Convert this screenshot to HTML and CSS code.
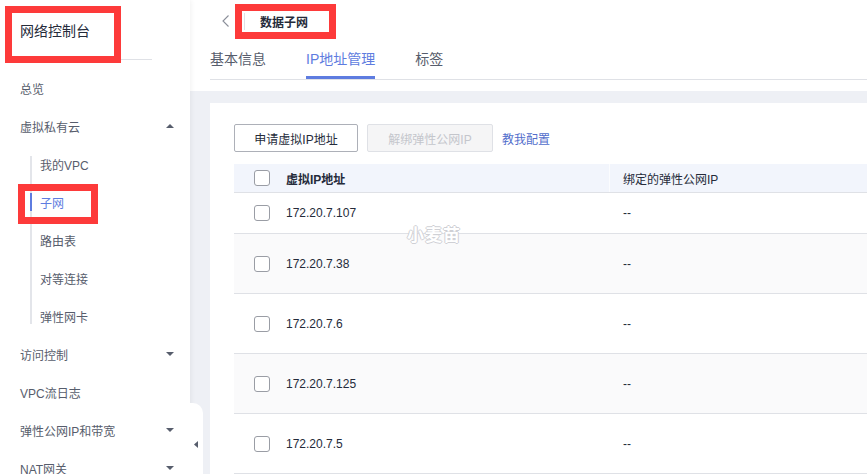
FILE: index.html
```html
<!DOCTYPE html>
<html lang="zh-CN">
<head>
<meta charset="utf-8">
<title>数据子网 - IP地址管理</title>
<link rel="stylesheet" href="styles.css">
</head>
<body>
<div class="app">
  <aside class="sidebar">
    <div class="side-title">网络控制台</div>
    <div class="side-divider"></div>
    <nav class="menu">
      <div class="menu-item">总览</div>
      <div class="menu-item">虚拟私有云
        <svg class="caret" width="8" height="4" viewBox="0 0 8 4"><path d="M0 4L4 0L8 4Z"/></svg>
      </div>
      <div class="sub">
        <div class="sub-item">我的VPC</div>
        <div class="sub-item active">子网</div>
        <div class="sub-item">路由表</div>
        <div class="sub-item">对等连接</div>
        <div class="sub-item">弹性网卡</div>
      </div>
      <div class="menu-item">访问控制
        <svg class="caret" width="8" height="4" viewBox="0 0 8 4"><path d="M0 0L4 4L8 0Z"/></svg>
      </div>
      <div class="menu-item">VPC流日志</div>
      <div class="menu-item">弹性公网IP和带宽
        <svg class="caret" width="8" height="4" viewBox="0 0 8 4"><path d="M0 0L4 4L8 0Z"/></svg>
      </div>
      <div class="menu-item">NAT网关
        <svg class="caret" width="8" height="4" viewBox="0 0 8 4"><path d="M0 0L4 4L8 0Z"/></svg>
      </div>
    </nav>
  </aside>

  <main class="main">
    <header class="header">
      <div class="crumb">
        <svg class="back" width="7" height="12" viewBox="0 0 7 12"><path d="M6.5 0.5L1 6L6.5 11.5" fill="none" stroke="#8a8e99" stroke-width="1.1"/></svg>
        <span class="crumb-sep"></span>
        <span class="crumb-title">数据子网</span>
      </div>
      <div class="tabs">
        <div class="tab">基本信息</div>
        <div class="tab active">IP地址管理</div>
        <div class="tab">标签</div>
      </div>
    </header>

    <section class="content">
      <div class="card">
        <div class="toolbar">
          <button class="btn">申请虚拟IP地址</button>
          <button class="btn disabled">解绑弹性公网IP</button>
          <a class="link">教我配置</a>
        </div>
        <div class="table">
          <div class="row head">
            <div class="cell first"><span class="check"></span><span class="th-strong">虚拟IP地址</span></div>
            <div class="cell second">绑定的弹性公网IP</div>
          </div>
          <div class="row short">
            <div class="cell first"><span class="check"></span>172.20.7.107</div>
            <div class="cell second">--</div>
          </div>
          <div class="row stripe">
            <div class="cell first"><span class="check"></span>172.20.7.38</div>
            <div class="cell second">--</div>
          </div>
          <div class="row">
            <div class="cell first"><span class="check"></span>172.20.7.6</div>
            <div class="cell second">--</div>
          </div>
          <div class="row stripe">
            <div class="cell first"><span class="check"></span>172.20.7.125</div>
            <div class="cell second">--</div>
          </div>
          <div class="row">
            <div class="cell first"><span class="check"></span>172.20.7.5</div>
            <div class="cell second">--</div>
          </div>
        </div>
      </div>
    </section>
  </main>

  <div class="collapse-tab">
    <svg width="4" height="7" viewBox="0 0 4 7"><path d="M4 0L0 3.5L4 7Z"/></svg>
  </div>
  <div class="watermark">小麦苗</div>
  <div class="mark mark-title"></div>
  <div class="mark mark-crumb"></div>
  <div class="mark mark-sub"></div>
</div>
</body>
</html>
```

FILE: styles.css
```css
* { box-sizing: border-box; }
html, body { margin: 0; padding: 0; }
body {
  width: 867px;
  height: 474px;
  overflow: hidden;
  font-family: "Liberation Sans", "Noto Sans CJK SC", sans-serif;
  font-size: 12px;
  color: #252b3a;
  background: #eef0f5;
}
.app {
  position: relative;
  display: flex;
  width: 867px;
  height: 474px;
  overflow: hidden;
}

/* Sidebar */
.sidebar {
  position: relative;
  z-index: 2;
  width: 190px;
  flex: none;
  background: #fff;
  box-shadow: 1px 0 5px rgba(0, 0, 0, 0.06);
}
.side-title {
  height: 59px;
  display: flex;
  align-items: center;
  padding-left: 20px;
  font-size: 14px;
  color: #252b3a;
}
.side-divider {
  height: 1px;
  margin: 0 38px 0 20px;
  background: #dfe1e6;
}
.menu { padding-top: 9px; }
.menu-item {
  height: 38px;
  display: flex;
  align-items: center;
  justify-content: space-between;
  padding: 0 16px 0 20px;
  color: #575d6c;
}
.caret { fill: #575d6c; }
.sub { position: relative; }
.sub::before {
  content: "";
  position: absolute;
  left: 30px;
  top: 11px;
  bottom: 11px;
  width: 2px;
  background: #e3e5ea;
}
.sub-item {
  position: relative;
  height: 38px;
  display: flex;
  align-items: center;
  padding-left: 40px;
  color: #575d6c;
}
.sub-item.active { color: #5e7ce0; }
.sub-item.active::before {
  content: "";
  position: absolute;
  left: 30px;
  top: 10px;
  width: 2px;
  height: 18px;
  background: #5e7ce0;
}

/* Main */
.main {
  flex: 1;
  display: flex;
  flex-direction: column;
  min-width: 0;
}
.header {
  height: 91px;
  flex: none;
  background: #fff;
}
.crumb {
  height: 42px;
  display: flex;
  align-items: center;
  padding-left: 32px;
}
.crumb-sep {
  width: 1px;
  height: 17px;
  margin-left: 15px;
  background: #dfe1e6;
}
.crumb-title {
  margin-left: 15px;
  font-weight: bold;
  color: #252b3a;
}
.tabs {
  display: flex;
  gap: 40px;
  margin-left: 20px;
  border-bottom: 1px solid #dfe1e6;
}
.tab {
  position: relative;
  height: 37px;
  padding-top: 8px;
  line-height: 18px;
  font-size: 14px;
  color: #575d6c;
}
.tab.active { color: #5e7ce0; }
.tab.active::after {
  content: "";
  position: absolute;
  left: 0;
  right: 0;
  bottom: 0;
  height: 3px;
  background: #5e7ce0;
}

.content {
  flex: 1;
  padding: 12px 0 0 20px;
  display: flex;
}
.card {
  flex: 1;
  background: #fff;
  padding: 21px 0 0 24px;
}
.toolbar {
  display: flex;
  align-items: center;
  gap: 9px;
  height: 28px;
}
.btn {
  height: 28px;
  width: 124px;
  padding: 0;
  font-family: inherit;
  font-size: 12px;
  color: #252b3a;
  background: #fff;
  border: 1px solid #adb0b8;
  border-radius: 2px;
}
.btn.disabled {
  width: 126px;
  color: #c4c6cc;
  background: #f5f5f6;
  border-color: #dfe1e6;
}
.link {
  color: #526ecc;
  font-size: 12px;
}

.table { margin-top: 12px; }
.row {
  display: grid;
  grid-template-columns: 375px 1fr;
  height: 60px;
  border-bottom: 1px solid #dfe1e6;
  color: #252b3a;
}
.row.head {
  height: 29px;
  background: #f2f5fc;
}
.row.short { height: 41px; }
.row.stripe { background: #fafafb; }
.cell {
  display: flex;
  align-items: center;
}
.cell.first { padding-left: 20px; }
.cell.second { padding-left: 14px; }
.row.head .cell.second {
  padding-left: 13px;
  border-left: 1px solid #fbfcfe;
}
.th-strong { font-weight: 600; }
.check {
  width: 16px;
  height: 16px;
  margin-right: 16px;
  border: 1px solid #9a9da5;
  border-radius: 3px;
  background: #fff;
  flex: none;
}

/* Overlays */
.collapse-tab {
  position: absolute;
  z-index: 3;
  left: 180px;
  top: 403px;
  width: 23px;
  height: 71px;
  background: #fff;
  border-radius: 0 10px 0 0;
  padding: 38px 0 0 14px;
}
.collapse-tab svg { display: block; fill: #575d6c; }
.watermark {
  position: absolute;
  z-index: 3;
  left: 407px;
  top: 226px;
  font-size: 17px;
  font-weight: bold;
  color: #fff;
  text-shadow: 1px 0 0 #cfd0d5, -1px 0 0 #cfd0d5, 0 1px 0 #cfd0d5, 0 -1px 0 #cfd0d5;
  letter-spacing: 1px;
  line-height: 20px;
}
.mark {
  position: absolute;
  z-index: 4;
  border: 7px solid #fd3a3a;
}
.mark-title { left: 5px; top: 6px; width: 116px; height: 57px; }
.mark-crumb { left: 235px; top: 4px; width: 101px; height: 35px; }
.mark-sub { left: 18px; top: 184px; width: 80px; height: 40px; }
```
